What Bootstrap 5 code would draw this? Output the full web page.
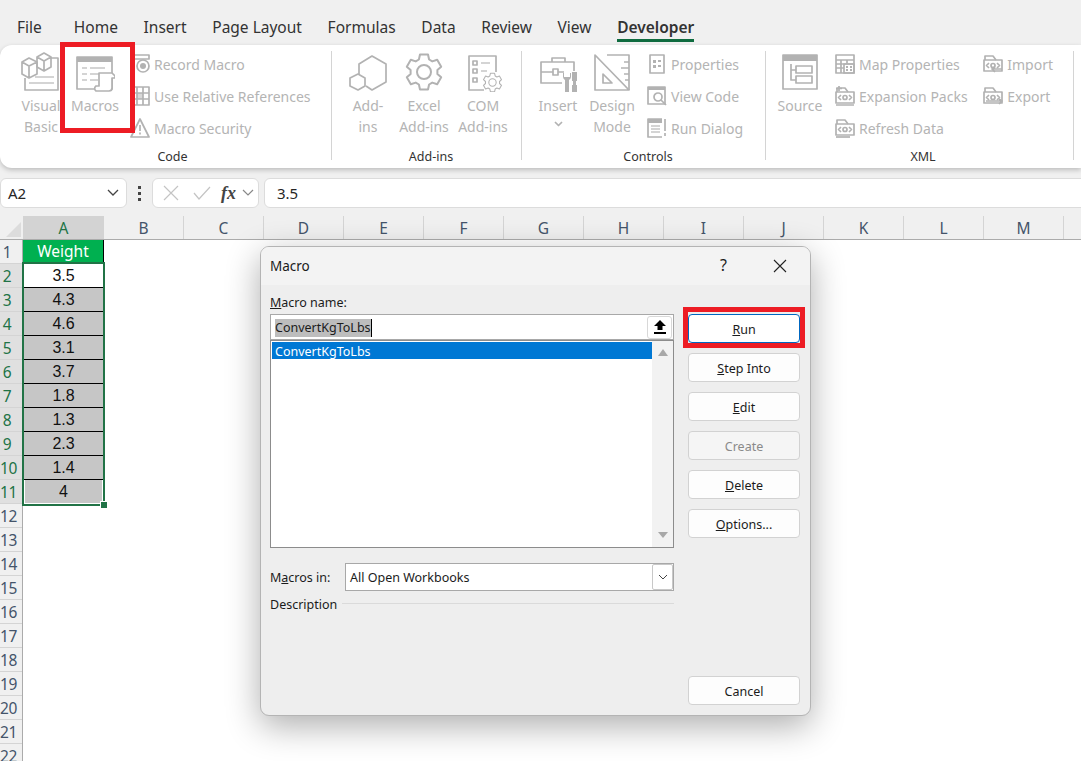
<!DOCTYPE html>
<html lang="en">
<head>
    <meta charset="UTF-8">
    <title>Macro</title>
    <link href="https://cdn.jsdelivr.net/npm/bootstrap@5.3.3/dist/css/bootstrap.min.css" rel="stylesheet">
    <style>
        html, body { height: 761px; overflow: hidden; }
        body { position: relative; background: #fff; color: #262626; font-family: "Noto Sans", "Open Sans", sans-serif; font-size: 14px; }

        /* tabs */
        .tab-strip { height: 45px; background: #f0f0f0; padding: 15px 0 0 17px; gap: 25.7px; flex-wrap: nowrap; }
        .tab-item { font-size: 15.5px; line-height: 24px; color: #333; white-space: nowrap; }
        .tab-home { margin-left: 6.3px; }
        .tab-active { font-weight: 600; position: relative; }
        .tab-active::after { content: ""; position: absolute; left: 0; right: 0; top: 24px; height: 3px; background: #0f6b3f; }

        /* ribbon */
        .ribbon-wrap { background: #f0f0f0; height: 133px; }
        .ribbon { height: 123px; background: #fff; border-radius: 12px 0 0 12px; padding-top: 6px; box-shadow: 0 2px 5px rgba(0,0,0,.22); color: #b4b4b4; font-size: 14px; line-height: 21px; }
        .rb-group { height: 109px; border-right: 1px solid #d4d4d4; flex: none; }
        .rb-code { width: 332px; padding-left: 14px; }
        .rb-addins { width: 190px; padding-left: 9px; }
        .rb-controls { width: 244px; padding-left: 9px; }
        .rb-xml { width: 308px; padding-left: 7px; }
        .rb-body { height: 94px; }
        .rb-title { padding-top: 1px; line-height: 21px; font-size: 12.5px; color: #333; text-align: center; }
        .big-btn { width: 54px; text-align: center; flex: none; }
        .big-wide { width: 58px; }
        .big-wider { width: 60px; }
        .big-ico { display: block; width: 40px; height: 40px; margin: 1px auto 3px; }
        .small-col { display: flex; flex-direction: column; gap: 6px; margin-left: 8px; flex: none; }
        .small-btn { display: flex; align-items: center; gap: 4px; height: 26px; white-space: nowrap; }
        .small-btn svg { width: 20px; height: 20px; flex: none; }
        .xml-right { margin-left: auto; margin-right: 20px; }
        .ico { fill: none; stroke: #b2b2b2; stroke-width: 1.7; stroke-linejoin: round; }
        .ico-fill { fill: #b2b2b2; stroke: none; }
        .ico-thin { fill: none; stroke: #c6c6c6; stroke-width: 1.4; }
        .drop-mark { display: block; width: 9px; height: 6px; margin: 5px auto 0; }

        /* formula bar */
        .formula-bar { height: 38px; background: #f0f0f0; padding-bottom: 8px; }
        .fbox { height: 30px; background: #fff; border: 1px solid #dcdcdc; border-radius: 6px; }
        .name-box { width: 127px; padding: 0 7px; font-size: 15px; }
        .fx-box { width: 107px; margin-left: 8px; padding: 0 4px 0 6px; }
        .value-box { flex: 1; margin-left: 5px; margin-right: -8px; padding-left: 12px; font-size: 15px; }
        .grip { width: 25px; text-align: center; color: #444; font-weight: 700; }
        .fx-label { font-family: "Liberation Serif", serif; font-style: italic; font-weight: 700; font-size: 18px; color: #444; }

        /* sheet */
        .col-strip { height: 24px; background: #f0f0f0; border-bottom: 1px solid #ababab; }
        .corner-cell { width: 23px; position: relative; }
        .corner-cell::after { content: ""; position: absolute; right: 2px; bottom: 2px; border-style: solid; border-width: 0 0 15px 15px; border-color: transparent transparent #dcdcdc transparent; }
        .col-cell { width: 80px; text-align: center; font-size: 15.5px; line-height: 24px; color: #44546a; border-right: 1px solid #d4d4d4; flex: none; }
        .col-sel { width: 81px; background: #d3d3d3; color: #217346; border-right: 0; }
        .row-strip { width: 23px; background: #f0f0f0; border-right: 1px solid #ababab; flex: none; }
        .row-cell { height: 24px; padding-right: 8px; text-align: center; font-size: 15.5px; line-height: 24px; color: #44546a; border-bottom: 1px solid #d4d4d4; letter-spacing: -.3px; white-space: nowrap; }
        .row-sel { background: #e0e0e0; color: #217346; }
        .cell-col { width: 81px; flex: none; }
        .head-cell { height: 23px; background: #00b050; color: #fff; text-align: center; font-size: 15.5px; line-height: 23px; border-right: 1px solid #000; }
        .sel-range { position: relative; border: 2px solid #217346; margin: -1px -1px 0 -1px; width: 83px; }
        .data-cell { height: 24px; background: #c6c6c6; border-bottom: 1px solid #000; font-family: "Liberation Sans", Arial, sans-serif; font-size: 16px; line-height: 24px; color: #111; text-align: center; }
        .data-first { background: #fff; }
        .data-last { border: 1px solid #fff; border-width: 0 1px 1px; }
        .sel-handle { position: absolute; right: -4px; bottom: -4px; width: 6px; height: 6px; background: #217346; outline: 1px solid #fff; }

        /* macro dialog */
        .macro-dlg { position: absolute; left: 260px; top: 246px; width: 551px; height: 470px; background: #eee; border: 1px solid #b4b4b4; border-radius: 9px; box-shadow: 0 10px 34px rgba(0,0,0,.32); font-size: 12.5px; color: #1b1b1b; overflow: hidden; }
        .dlg-head { height: 38px; background: #f3f3f3; padding: 0 23px 0 9px; font-size: 13.5px; }
        .dlg-help { font-size: 16px; margin: 0 46px 3px 0; }
        .dlg-body { padding: 9px 10px 9px 9px; height: 430px; gap: 14px; }
        .dlg-left { width: 404px; flex: none; }
        .dlg-right { width: 112px; flex: none; padding-top: 20px; gap: 10px; height: 411px; }
        .name-label { line-height: 18px; }
        .name-input { height: 26px; margin-top: 2px; background: #fff; border: 1px solid #a8a8a8; padding: 0 1px 0 4px; }
        .picked { background: #bdbdbd; border-right: 1px solid #000; line-height: 18px; margin-top: 1px; }
        .upload-btn { width: 25px; height: 23px; background: #fff; border: 1px solid #d8d8d8; border-radius: 3px; }
        .macro-list { height: 208px; border: 1px solid #8c8c8c; background: #fff; padding: 1px; }
        .macro-list .list-group { flex: 1; border-radius: 0; }
        .macro-list .list-group-item { padding: 0 3px; height: 17px; line-height: 19px; font-size: 12.5px; border: 0; border-radius: 0; background: #0078d4; color: #fff; }
        .scroll-track { width: 21px; background: #f2f2f2; margin: -1px -1px -1px 0; padding: 8px 0 9px; }
        .tri-up { width: 0; height: 0; border: 5px solid transparent; border-top: 0; border-bottom: 7px solid #a8a8a8; }
        .tri-down { width: 0; height: 0; border: 5px solid transparent; border-bottom: 0; border-top: 6px solid #a8a8a8; }
        .in-row { margin-top: 15px; height: 28px; }
        .in-label { width: 75px; flex: none; }
        .in-select { flex: 1; height: 28px; background: #fff; border: 1px solid #a8a8a8; padding-left: 4px; }
        .in-arrow { width: 21px; height: 26px; border: 1px solid #c8c8c8; border-radius: 2px; }
        .txt-nudge { margin-top: 2px; }
        .desc-row { margin-top: 5px; line-height: 18px; gap: 5px; }
        .desc-line { flex: 1; height: 1px; background: #dadada; margin-top: -4px; }
        .dlg-btn { height: 29px; padding: 1px 0 0; width: 112px; background: #fdfdfd; border: 1px solid #d2d2d2; border-radius: 4px; font-size: 12.5px; line-height: 27px; color: #1b1b1b; }
        .dlg-btn-main { background: #fff; border: 1.5px solid #0067c0; }
        .dlg-btn-off { color: #8a8a8a; background: #f5f5f5; opacity: 1; }
        .cancel-btn { margin-top: auto; }

        /* red call-outs */
        .red-frame { position: absolute; border: 5px solid #ed1c24; pointer-events: none; }
        .frame-macros { left: 60px; top: 42px; width: 75px; height: 91px; }
        .frame-run { left: 683px; top: 307px; width: 122px; height: 41px; }
    </style>
</head>
<body>
    <svg width="0" height="0" class="position-absolute">
        <symbol id="gear" viewBox="0 0 40 40">
            <polygon points="14.9,7.5 16,2.5 24,2.5 25.1,7.5 28.3,9.4 33.2,7.7 37.2,14.7 33.4,18.1 33.4,21.9 37.2,25.3 33.2,32.3 28.3,30.6 25.1,32.5 24,37.5 16,37.5 14.9,32.5 11.7,30.6 6.8,32.3 2.8,25.3 6.6,21.9 6.6,18.1 2.8,14.7 6.8,7.7 11.7,9.4" fill="#fff" stroke="#b2b2b2" stroke-width="2" stroke-linejoin="round"/>
            <circle cx="20" cy="20" r="7" fill="none" stroke="#b2b2b2" stroke-width="2"/>
        </symbol>
        <symbol id="xml-doc" viewBox="0 0 20 20">
            <path class="ico" d="M2 6V2h8l3 4" />
            <rect class="ico" x="1" y="6" width="18" height="11"/>
            <path class="ico" stroke-width="1.3" d="M6 9l-2.500 2.500L6 14M14 9l2.500 2.500L14 14"/>
            <circle class="ico" cx="10" cy="11.500" r="2"/>
        </symbol>
    </svg>

    <ul class="nav tab-strip">
        <li class="tab-item">File</li>
        <li class="tab-item tab-home">Home</li>
        <li class="tab-item">Insert</li>
        <li class="tab-item">Page Layout</li>
        <li class="tab-item">Formulas</li>
        <li class="tab-item">Data</li>
        <li class="tab-item">Review</li>
        <li class="tab-item">View</li>
        <li class="tab-item tab-active">Developer</li>
    </ul>

    <div class="ribbon-wrap">
        <div class="ribbon d-flex">
            <div class="rb-group rb-code">
                <div class="rb-body d-flex">
                    <div class="big-btn">
                        <svg class="big-ico" viewBox="0 0 40 40">
                            <path class="ico" d="M30 6h7v32H4V26"/>
                            <path class="ico-thin" d="M14 25h19M8 31h25"/>
                            <path class="ico" d="M1 10l7-4 8 4v12l-8 4-7-4zM1 10l7 4 8-4M8 14v12"/>
                            <path class="ico" d="M16 5l7-4 7 4v10l-7 4-7-4zM16 5l7 4 7-4M23 9v10"/>
                        </svg>
                        Visual Basic
                    </div>
                    <div class="big-btn">
                        <svg class="big-ico" viewBox="0 0 40 40">
                            <rect class="ico" x="2" y="5" width="35" height="32"/>
                            <rect class="ico-fill" x="2" y="5" width="35" height="5"/>
                            <path class="ico-thin" d="M7 16h5M15 16h15M7 22h5M15 22h10M7 28h5M15 28h8"/>
                            <path d="M24 21h13l3 3v2h-3v10a3 3 0 0 1-3 3H21a3 3 0 0 1 0-5h3z" fill="#fff" stroke="#b2b2b2" stroke-width="1.7" stroke-linejoin="round"/>
                        </svg>
                        Macros
                    </div>
                    <div class="small-col">
                        <div class="small-btn">
                            <svg viewBox="0 0 20 20"><path class="ico" d="M1 19V1h18v4H1"/><circle class="ico" cx="13" cy="12" r="6"/><circle class="ico-fill" cx="13" cy="12" r="3"/></svg>
                            Record Macro
                        </div>
                        <div class="small-btn">
                            <svg viewBox="0 0 20 20"><path class="ico" d="M1 1h18v18H1zM1 7h18M1 13h18M7 1v18M13 1v18"/><rect class="ico-fill" x="7" y="7" width="6" height="6" opacity=".5"/></svg>
                            Use Relative References
                        </div>
                        <div class="small-btn">
                            <svg viewBox="0 0 20 20"><path class="ico" d="M10 1l9 18H1z"/><path class="ico" stroke-width="2" d="M10 7v6M10 14.500v2"/></svg>
                            Macro Security
                        </div>
                    </div>
                </div>
                <div class="rb-title">Code</div>
            </div>

            <div class="rb-group rb-addins">
                <div class="rb-body d-flex">
                    <div class="big-btn">
                        <svg class="big-ico" viewBox="0 0 40 40">
                            <path class="ico" d="M11 22V12L24 4l14 8v18l-14 8-6-4"/>
                            <path class="ico" d="M10 22l7 4v8l-7 4-8-4v-8z"/>
                        </svg>
                        Add-<br>ins
                    </div>
                    <div class="big-btn big-wide">
                        <svg class="big-ico" viewBox="0 0 40 40"><use href="#gear"/></svg>
                        Excel Add-ins
                    </div>
                    <div class="big-btn big-wider">
                        <svg class="big-ico" viewBox="0 0 40 40">
                            <path class="ico" d="M33 20V4H6v34h15"/>
                            <rect class="ico" x="10" y="9" width="4" height="4"/>
                            <rect class="ico" x="10" y="17" width="4" height="4"/>
                            <rect class="ico" x="10" y="26" width="4" height="4"/>
                            <path class="ico-thin" d="M18 11h9M18 19h6"/>
                            <svg x="19" y="20" width="21" height="21" viewBox="0 0 40 40"><use href="#gear"/></svg>
                        </svg>
                        COM Add-ins
                    </div>
                </div>
                <div class="rb-title">Add-ins</div>
            </div>

            <div class="rb-group rb-controls">
                <div class="rb-body d-flex">
                    <div class="big-btn">
                        <svg class="big-ico" viewBox="0 0 40 40">
                            <path class="ico" d="M14 10V6h13v4M24 31H3V10h33v9M3 20h12M20 20h6"/>
                            <rect class="ico" x="15" y="17" width="5" height="6"/>
                            <path class="ico-fill" d="M25 21v4a4 4 0 0 0 2 3v13h4V28a4 4 0 0 0 2-3v-4h-1v4h-6v-4z"/>
                            <path class="ico-fill" d="M34 20h5v9h-1v4h1v8h-5v-8h1v-4h-1z"/>
                        </svg>
                        Insert
                        <svg class="drop-mark" viewBox="0 0 9 6"><path class="ico" stroke-width="1.200" d="M1 1l3.500 3.500L8 1"/></svg>
                    </div>
                    <div class="big-btn">
                        <svg class="big-ico" viewBox="0 0 40 40">
                            <path class="ico" stroke-width="2" d="M3 3l34 35H3zM11 22l9 9h-9z"/>
                            <path class="ico" stroke-width="2" d="M15 3h22v35M32 10h5M29 16h8M32 22h5M33 28h4"/>
                        </svg>
                        Design Mode
                    </div>
                    <div class="small-col">
                        <div class="small-btn">
                            <svg viewBox="0 0 20 20"><rect class="ico" x="3" y="1" width="14" height="18"/><path class="ico-fill" d="M6 6h3v3H6zM11 6h3v2h-3zM6 11h3v3H6zM11 11h3v2h-3z"/></svg>
                            Properties
                        </div>
                        <div class="small-btn">
                            <svg viewBox="0 0 20 20"><rect class="ico" x="1" y="1" width="17" height="17"/><path class="ico-fill" d="M1 1h17v3H1z"/><circle class="ico" cx="11" cy="11" r="4"/><path class="ico" d="M14 14l5 5"/></svg>
                            View Code
                        </div>
                        <div class="small-btn">
                            <svg viewBox="0 0 20 20"><path class="ico" d="M15 1H1v18h14"/><path class="ico-fill" d="M1 1h14v4H1z"/><path class="ico-thin" d="M4 8h9M4 11h9M4 14h9"/><path class="ico" stroke-width="2" d="M18 1v12M18 15v3"/></svg>
                            Run Dialog
                        </div>
                    </div>
                </div>
                <div class="rb-title">Controls</div>
            </div>

            <div class="rb-group rb-xml">
                <div class="rb-body d-flex">
                    <div class="big-btn">
                        <svg class="big-ico" viewBox="0 0 40 40">
                            <rect class="ico" stroke-width="2" x="3" y="3" width="34" height="34"/>
                            <rect class="ico-fill" x="3" y="3" width="34" height="6"/>
                            <path class="ico" d="M11 12v16h5M11 18h5"/>
                            <rect class="ico" x="16" y="14" width="16" height="7"/>
                            <rect class="ico" x="16" y="24" width="16" height="7"/>
                        </svg>
                        Source
                    </div>
                    <div class="small-col">
                        <div class="small-btn">
                            <svg viewBox="0 0 20 20"><path class="ico" d="M1 1h18v18H1zM1 6h18M1 10h18M1 14h8M6 6v13M12 6v4"/><rect class="ico" x="9" y="10" width="10" height="9"/><path class="ico-fill" d="M11 12h2v2h-2zM15 12h2v2h-2zM11 15h2v2h-2zM15 15h2v2h-2z"/></svg>
                            Map Properties
                        </div>
                        <div class="small-btn">
                            <svg viewBox="0 0 20 20"><use href="#xml-doc"/><path class="ico" d="M4 0v5M1 2.500h6M1 19h18"/></svg>
                            Expansion Packs
                        </div>
                        <div class="small-btn">
                            <svg viewBox="0 0 20 20"><use href="#xml-doc"/><path class="ico" d="M1 19h14"/></svg>
                            Refresh Data
                        </div>
                    </div>
                    <div class="small-col xml-right">
                        <div class="small-btn">
                            <svg viewBox="0 0 20 20"><use href="#xml-doc"/><path class="ico" d="M19 15H9l3-2M9 15l3 3"/></svg>
                            Import
                        </div>
                        <div class="small-btn">
                            <svg viewBox="0 0 20 20"><use href="#xml-doc"/><path class="ico" d="M3 15h16l-3-2M19 15l-3 3"/></svg>
                            Export
                        </div>
                    </div>
                </div>
                <div class="rb-title">XML</div>
            </div>
        </div>
    </div>

    <div class="formula-bar d-flex">
        <div class="fbox name-box d-flex align-items-center justify-content-between">
            A2
            <svg width="12" height="8" viewBox="0 0 12 8"><path d="M1 1l5 5 5-5" fill="none" stroke="#444" stroke-width="1.300"/></svg>
        </div>
        <div class="grip d-flex flex-column align-items-center justify-content-center gap-1 ms-0">
            <svg width="4" height="16" viewBox="0 0 4 16"><path d="M0 1h3v3H0zM0 7h3v3H0zM0 13h3v3H0z" fill="#444"/></svg>
        </div>
        <div class="fbox fx-box d-flex align-items-center justify-content-between ms-0">
            <svg width="16" height="16" viewBox="0 0 16 16" class="ms-1"><path d="M1 1l14 14M15 1L1 15" stroke="#c4c4c4" stroke-width="1.200"/></svg>
            <svg width="18" height="14" viewBox="0 0 18 14" class="ms-2"><path d="M1 7l5 6L17 1" fill="none" stroke="#c4c4c4" stroke-width="1.200"/></svg>
            <span class="fx-label ms-1">fx</span>
            <svg width="12" height="8" viewBox="0 0 12 8"><path d="M1 1l5 5 5-5" fill="none" stroke="#888" stroke-width="1.200"/></svg>
        </div>
        <div class="fbox value-box d-flex align-items-center">3.5</div>
    </div>

    <div class="col-strip d-flex">
        <div class="corner-cell"></div>
        <div class="col-cell col-sel">A</div>
        <div class="col-cell">B</div>
        <div class="col-cell">C</div>
        <div class="col-cell">D</div>
        <div class="col-cell">E</div>
        <div class="col-cell">F</div>
        <div class="col-cell">G</div>
        <div class="col-cell">H</div>
        <div class="col-cell">I</div>
        <div class="col-cell">J</div>
        <div class="col-cell">K</div>
        <div class="col-cell">L</div>
        <div class="col-cell">M</div>
    </div>

    <div class="d-flex">
        <div class="row-strip">
            <div class="row-cell">1</div>
            <div class="row-cell row-sel">2</div>
            <div class="row-cell row-sel">3</div>
            <div class="row-cell row-sel">4</div>
            <div class="row-cell row-sel">5</div>
            <div class="row-cell row-sel">6</div>
            <div class="row-cell row-sel">7</div>
            <div class="row-cell row-sel">8</div>
            <div class="row-cell row-sel">9</div>
            <div class="row-cell row-sel">10</div>
            <div class="row-cell row-sel">11</div>
            <div class="row-cell">12</div>
            <div class="row-cell">13</div>
            <div class="row-cell">14</div>
            <div class="row-cell">15</div>
            <div class="row-cell">16</div>
            <div class="row-cell">17</div>
            <div class="row-cell">18</div>
            <div class="row-cell">19</div>
            <div class="row-cell">20</div>
            <div class="row-cell">21</div>
            <div class="row-cell">22</div>
        </div>
        <div class="cell-col">
            <div class="head-cell">Weight</div>
            <div class="sel-range">
                <div class="data-cell data-first">3.5</div>
                <div class="data-cell">4.3</div>
                <div class="data-cell">4.6</div>
                <div class="data-cell">3.1</div>
                <div class="data-cell">3.7</div>
                <div class="data-cell">1.8</div>
                <div class="data-cell">1.3</div>
                <div class="data-cell">2.3</div>
                <div class="data-cell">1.4</div>
                <div class="data-cell data-last">4</div>
                <div class="sel-handle"></div>
            </div>
        </div>
    </div>

    <div class="macro-dlg">
        <div class="dlg-head d-flex align-items-center justify-content-between">
            <span>Macro</span>
            <div class="d-flex align-items-center">
                <span class="dlg-help">?</span>
                <svg width="14" height="14" viewBox="0 0 14 14"><path d="M1 1l12 12M13 1L1 13" stroke="#222" stroke-width="1.100"/></svg>
            </div>
        </div>
        <div class="dlg-body d-flex">
            <div class="dlg-left">
                <div class="name-label"><u>M</u>acro name:</div>
                <div class="name-input d-flex align-items-center justify-content-between">
                    <span class="picked">ConvertKgToLbs</span>
                    <div class="upload-btn d-flex align-items-center justify-content-center">
                        <svg width="12" height="14" viewBox="0 0 12 14"><path d="M6 0l6 6H8.500v4h-5V6H0zM0 12h12v2H0z" fill="#000"/></svg>
                    </div>
                </div>
                <div class="macro-list d-flex">
                    <div class="list-group">
                        <div class="list-group-item active">ConvertKgToLbs</div>
                    </div>
                    <div class="scroll-track d-flex flex-column align-items-center justify-content-between">
                        <div class="tri-up"></div>
                        <div class="tri-down"></div>
                    </div>
                </div>
                <div class="in-row d-flex align-items-center">
                    <div class="in-label txt-nudge">M<u>a</u>cros in:</div>
                    <div class="in-select d-flex align-items-center justify-content-between">
                        <span class="txt-nudge">All Open Workbooks</span>
                        <div class="in-arrow d-flex align-items-center justify-content-center">
                            <svg width="10" height="6" viewBox="0 0 10 6"><path d="M1 1l4 4 4-4" fill="none" stroke="#444"/></svg>
                        </div>
                    </div>
                </div>
                <div class="desc-row d-flex align-items-center">
                    <span>Description</span>
                    <div class="desc-line"></div>
                </div>
            </div>
            <div class="dlg-right d-flex flex-column">
                <button class="btn dlg-btn dlg-btn-main"><u>R</u>un</button>
                <button class="btn dlg-btn"><u>S</u>tep Into</button>
                <button class="btn dlg-btn"><u>E</u>dit</button>
                <button class="btn dlg-btn dlg-btn-off">Create</button>
                <button class="btn dlg-btn"><u>D</u>elete</button>
                <button class="btn dlg-btn"><u>O</u>ptions...</button>
                <button class="btn dlg-btn cancel-btn">Cancel</button>
            </div>
        </div>
    </div>

    <div class="red-frame frame-macros"></div>
    <div class="red-frame frame-run"></div>
</body>
</html>
